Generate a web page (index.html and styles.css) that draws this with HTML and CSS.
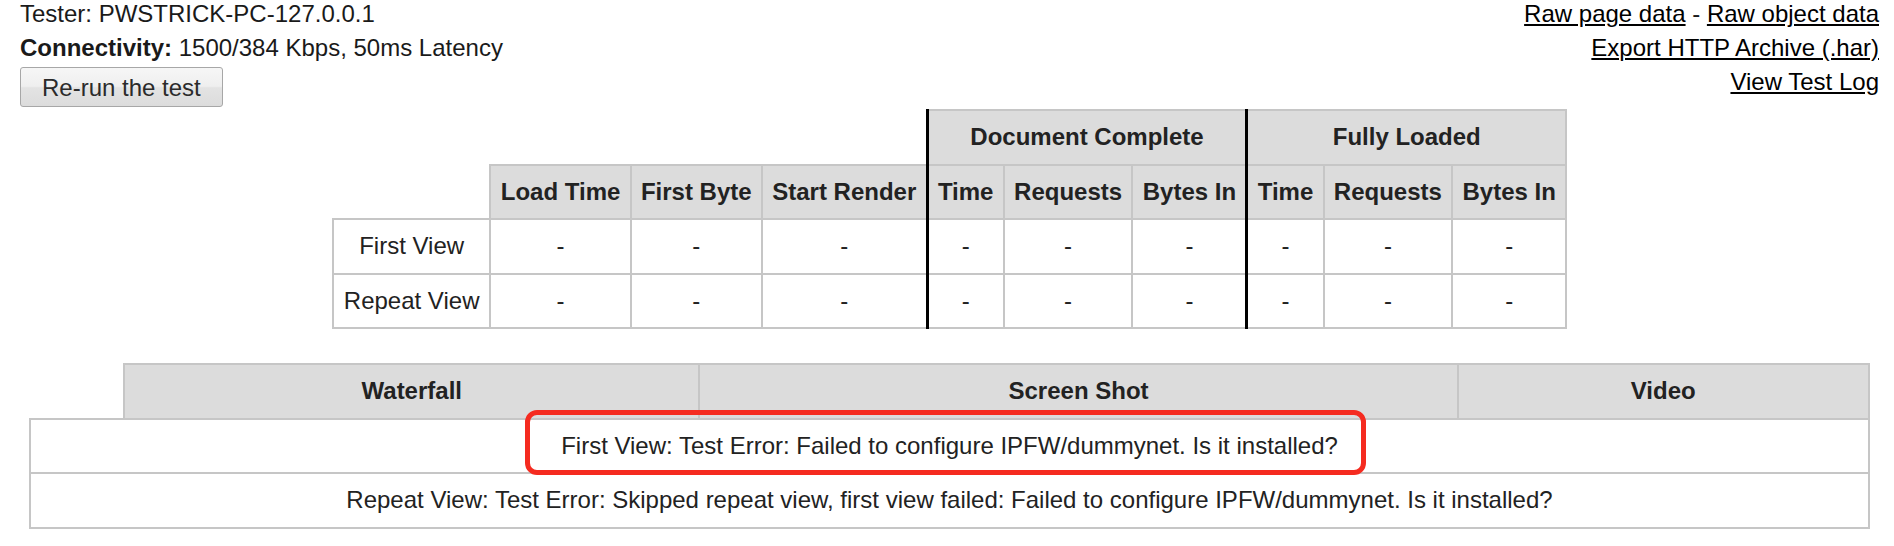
FILE: index.html
```html
<!DOCTYPE html>
<html lang="en">
<head>
<meta charset="utf-8">
<title>Test Result</title>
<link rel="stylesheet" href="styles.css">
</head>
<body>
  <div class="top">
    <div class="info">
      <p>Tester: PWSTRICK-PC-127.0.0.1</p>
      <p class="conn"><b>Connectivity:</b> 1500/384 Kbps, 50ms Latency</p>
      <button class="btn" type="button">Re-run the test</button>
    </div>
    <div class="links">
      <div><a href="#">Raw page data</a> - <a href="#">Raw object data</a></div>
      <div><a href="#">Export HTTP Archive (.har)</a></div>
      <div><a href="#">View Test Log</a></div>
    </div>
  </div>

  <table class="summary">
    <tr>
      <th class="blank" colspan="4"></th>
      <th class="gs" colspan="3">Document Complete</th>
      <th class="gs" colspan="3">Fully Loaded</th>
    </tr>
    <tr>
      <th class="blank"></th>
      <th>Load Time</th>
      <th>First Byte</th>
      <th>Start Render</th>
      <th class="gs">Time</th>
      <th>Requests</th>
      <th>Bytes In</th>
      <th class="gs">Time</th>
      <th>Requests</th>
      <th>Bytes In</th>
    </tr>
    <tr>
      <td class="label">First View</td>
      <td>-</td><td>-</td><td>-</td>
      <td class="gs">-</td><td>-</td><td>-</td>
      <td class="gs">-</td><td>-</td><td>-</td>
    </tr>
    <tr>
      <td class="label">Repeat View</td>
      <td>-</td><td>-</td><td>-</td>
      <td class="gs">-</td><td>-</td><td>-</td>
      <td class="gs">-</td><td>-</td><td>-</td>
    </tr>
  </table>

  <table class="media">
    <tr>
      <th class="blank c0"></th>
      <th class="c1">Waterfall</th>
      <th class="c2">Screen Shot</th>
      <th class="c3">Video</th>
    </tr>
    <tr>
      <td colspan="4">First View: Test Error: Failed to configure IPFW/dummynet. Is it installed?</td>
    </tr>
    <tr>
      <td colspan="4">Repeat View: Test Error: Skipped repeat view, first view failed: Failed to configure IPFW/dummynet. Is it installed?</td>
    </tr>
  </table>

  <div class="callout"></div>
</body>
</html>
```

FILE: styles.css
```css
html {
  background: #ffffff;
}

body {
  margin: 0;
  padding: 0 15px 0 20px;
  position: relative;
  font-family: "Liberation Sans", Arial, sans-serif;
  font-size: 24px;
  color: #1a1a1a;
  background: #ffffff;
}

.top {
  display: flex;
  justify-content: space-between;
  align-items: flex-start;
}

.info p {
  margin: 0 0 7px;
  line-height: 27px;
}

.info p.conn {
  margin-bottom: 6px;
}

.info b {
  font-weight: bold;
}

.btn {
  display: block;
  font-family: "Liberation Sans", Arial, sans-serif;
  font-size: 24px;
  line-height: 27px;
  color: #2b2b2b;
  padding: 6px 21px 5px;
  border: 1px solid #a7a7a7;
  border-radius: 3px;
  background: linear-gradient(to bottom, #f6f6f6 0%, #efefef 48%, #e3e3e3 52%, #dcdcdc 100%);
  cursor: pointer;
}

.links {
  text-align: right;
}

.links div {
  line-height: 27px;
  margin-bottom: 7px;
}

.links a {
  color: #000000;
  text-decoration: underline;
}

table {
  border-collapse: collapse;
}

th,
td {
  border: 2px solid #c6c6c6;
  padding: 13px 10px;
  line-height: 26.5px;
  text-align: center;
  font-size: 24px;
}

th {
  background: #dcdcdc;
  font-weight: bold;
  color: #222222;
  padding: 13px 9.3px;
}

td {
  background: #ffffff;
  color: #222222;
}

th.blank {
  background: transparent;
  border: none;
}

.gs {
  border-left: 3px solid #000000;
}

.summary {
  margin: 2px auto 0;
}

.summary td.label {
  padding: 13px 10px;
}

.media {
  margin: 34px auto 0;
  width: 99%;
  table-layout: fixed;
}

.media th {
  padding-left: 0;
  padding-right: 0;
}

.media .c0 { width: 5.07%; }
.media .c1 { width: 31.3%; }
.media .c2 { width: 41.3%; }
.media .c3 { width: 22.33%; }

.callout {
  position: absolute;
  left: 525px;
  top: 410px;
  width: 841px;
  height: 65px;
  box-sizing: border-box;
  border: 5px solid #f52b20;
  border-radius: 12px;
  pointer-events: none;
}
```
